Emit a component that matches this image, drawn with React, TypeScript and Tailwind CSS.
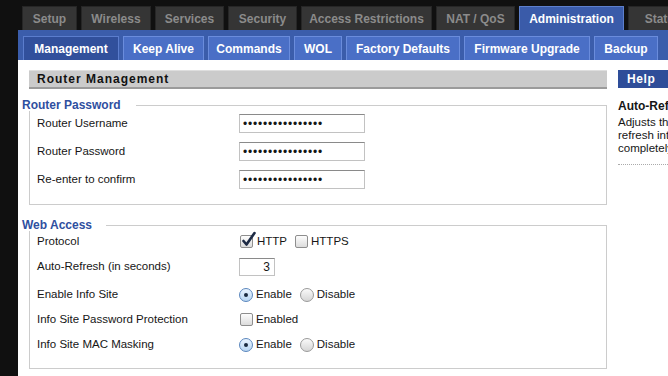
import React from 'react';

const mainTabs = [
    { label: 'Setup', w: 'w-[55px]' },
    { label: 'Wireless', w: 'w-[70px]' },
    { label: 'Services', w: 'w-[69px]' },
    { label: 'Security', w: 'w-[69px]' },
    { label: 'Access Restrictions', w: 'w-[131px]' },
    { label: 'NAT / QoS', w: 'w-[79px]' },
    { label: 'Administration', w: 'w-[105px]', active: true },
    { label: 'Status', w: 'w-[70px]' },
];

const subTabs = [
    { label: 'Management', w: 'w-[96px]', active: true },
    { label: 'Keep Alive', w: 'w-[81px]' },
    { label: 'Commands', w: 'w-[82px]' },
    { label: 'WOL', w: 'w-[48px]' },
    { label: 'Factory Defaults', w: 'w-[114px]' },
    { label: 'Firmware Upgrade', w: 'w-[126px]' },
    { label: 'Backup', w: 'w-[64px]' },
];

function Checkbox({ checked }: { checked?: boolean }) {
    return (
        <span className="relative w-[13px] h-[13px] shrink-0 rounded-[2px] border border-[#8e8e8e] bg-gradient-to-b from-[#fdfdfd] to-[#dcdcdc]">
            {checked && (
                <svg className="absolute left-[1px] top-[-4px] overflow-visible" width="14" height="15" viewBox="0 0 14 15">
                    <path d="M1.5 9 L4.5 12.5 L12.5 1" fill="none" stroke="#1d2a44" strokeWidth="2.6" strokeLinecap="round" strokeLinejoin="round" />
                </svg>
            )}
        </span>
    );
}

function Radio({ checked }: { checked?: boolean }) {
    return checked ? (
        <span className="w-[14px] h-[14px] shrink-0 rounded-full border border-[#5a86bd] bg-gradient-to-b from-[#eaf4ff] to-[#b9d6f2] flex items-center justify-center">
            <span className="w-[4px] h-[4px] rounded-full bg-[#1b2a3e]" />
        </span>
    ) : (
        <span className="w-[14px] h-[14px] shrink-0 rounded-full border border-[#9a9a9a] bg-gradient-to-b from-[#fafafa] to-[#d6d6d6]" />
    );
}

function Legend({ title, lineStart }: { title: string; lineStart: string }) {
    return (
        <div className="flex h-[12px] -ml-[7px]">
            <span className={`${lineStart} shrink-0 text-[12px] leading-[12px] font-bold text-[#2f4f9f]`}>{title}</span>
            <div className="flex-1 mt-[6px] border-t border-r border-[#cccccc]" />
        </div>
    );
}

function PasswordInput() {
    return (
        <input
            type="password"
            readOnly
            value="abcdefghijklmnop"
            className="w-[126px] h-[19px] px-[3px] text-[12px] tracking-[0.8px] border border-[#c2c2c2] border-t-[#8a8a8a] bg-white outline-none"
        />
    );
}

export default function App() {
    return (
        <div className="w-[668px] h-[376px] overflow-hidden bg-[#101010] pl-[18px] flex flex-col font-['Liberation_Sans',Arial,sans-serif] text-[12px] text-[#161616]">
            {/* main tabs */}
            <div className="h-[30px] shrink-0 flex items-end gap-[4px] pl-[4px] overflow-hidden">
                {mainTabs.map((t) => (
                    <div
                        key={t.label}
                        className={`${t.w} shrink-0 flex items-center justify-center font-bold whitespace-nowrap ${
                            t.active
                                ? 'h-[24px] bg-[#3a5ba9] border border-b-0 border-[#5d7fcb] text-white'
                                : 'h-[24px] bg-[#353535] border border-b-0 border-[#262626] text-[#8b8b8b]'
                        }`}
                    >
                        {t.label}
                    </div>
                ))}
            </div>

            {/* sub tabs */}
            <div className="h-[30px] shrink-0 bg-[#3b5dab] flex items-end gap-[4px] pl-[5px] overflow-hidden">
                {subTabs.map((t) => (
                    <div
                        key={t.label}
                        className={`${t.w} shrink-0 h-[24px] flex items-center justify-center font-bold text-white whitespace-nowrap border border-b-0 ${
                            t.active ? 'bg-[#31509c] border-[#5b7dcd]' : 'bg-[#4a6fc6] border-[#6a8cdc]'
                        }`}
                    >
                        {t.label}
                    </div>
                ))}
            </div>

            {/* content */}
            <div className="flex-1 bg-white flex pt-[10px]">
                <div className="ml-[11px] w-[578px] shrink-0 flex flex-col">
                    <div className="h-[19px] bg-[#cbcbcb] border-t border-t-[#dedede] border-b-2 border-b-[#9b9b9b] flex items-center pl-[8px] font-bold tracking-[1px] text-[#111]">
                        Router Management
                    </div>

                    <div className="mt-[10px]">
                        <Legend title="Router Password" lineStart="pr-[15px]" />
                        <div className="border-x border-b border-[#cccccc] pt-[3px] pb-[15px] pl-[7px] flex flex-col gap-[9px] text-[11.5px]">
                            {['Router Username', 'Router Password', 'Re-enter to confirm'].map((l) => (
                                <div key={l} className="flex items-center h-[19px]">
                                    <span className="w-[202px]">{l}</span>
                                    <PasswordInput />
                                </div>
                            ))}
                        </div>
                    </div>

                    <div className="mt-[14px]">
                        <Legend title="Web Access" lineStart="pr-[14px]" />
                        <div className="border-x border-b border-[#cccccc] pb-[11px] pl-[7px] flex flex-col text-[11.5px]">
                            <div className="flex items-center h-[21px]">
                                <span className="w-[203px]">Protocol</span>
                                <Checkbox checked />
                                <span className="ml-[4px]">HTTP</span>
                                <span className="ml-[8px] flex items-center">
                                    <Checkbox />
                                    <span className="ml-[3px]">HTTPS</span>
                                </span>
                            </div>
                            <div className="flex items-center h-[30px]">
                                <span className="w-[202px]">Auto-Refresh (in seconds)</span>
                                <input
                                    type="text"
                                    readOnly
                                    value="3"
                                    className="w-[36px] h-[18px] pr-[4px] text-right text-[12px] border border-[#c2c2c2] border-t-[#8a8a8a] bg-white outline-none"
                                />
                            </div>
                            <div className="flex items-center h-[25px]">
                                <span className="w-[202px]">Enable Info Site</span>
                                <Radio checked />
                                <span className="ml-[3px]">Enable</span>
                                <span className="ml-[8px] flex items-center">
                                    <Radio />
                                    <span className="ml-[3px]">Disable</span>
                                </span>
                            </div>
                            <div className="flex items-center h-[25px]">
                                <span className="w-[203px]">Info Site Password Protection</span>
                                <Checkbox />
                                <span className="ml-[3px]">Enabled</span>
                            </div>
                            <div className="flex items-center h-[25px]">
                                <span className="w-[202px]">Info Site MAC Masking</span>
                                <Radio checked />
                                <span className="ml-[3px]">Enable</span>
                                <span className="ml-[8px] flex items-center">
                                    <Radio />
                                    <span className="ml-[3px]">Disable</span>
                                </span>
                            </div>
                        </div>
                    </div>
                </div>

                {/* help */}
                <div className="ml-[11px] w-[200px] shrink-0 flex flex-col">
                    <div className="h-[18px] bg-[#2e4d99] flex items-center pl-[9px] font-bold text-white tracking-[0.6px]">Help</div>
                    <div className="mt-[12px] font-bold leading-[13px] whitespace-nowrap">Auto-Refresh:</div>
                    <div className="mt-[3px] leading-[13px] whitespace-nowrap text-[11.5px]">
                        <div>Adjusts the Web GUI automatic</div>
                        <div>refresh interval. 0 disables this feature</div>
                        <div>completely.</div>
                    </div>
                    <div className="mt-[9px] border-t border-dotted border-[#aaaaaa]" />
                </div>
            </div>
        </div>
    );
}
